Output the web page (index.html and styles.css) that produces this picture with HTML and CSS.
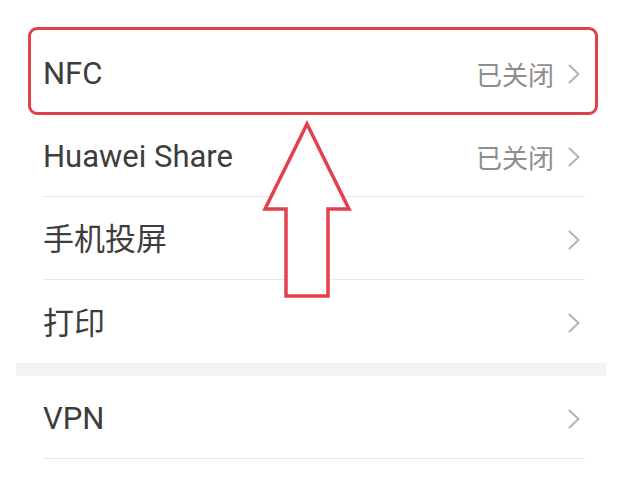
FILE: index.html
```html
<!DOCTYPE html>
<html lang="zh-CN">
<head>
<meta charset="utf-8">
<title>更多连接</title>
<link rel="stylesheet" href="styles.css">
</head>
<body>
<div class="page">
  <section class="card first">
    <div class="row"><span class="label">NFC</span><span class="trail"><span class="value">已关闭</span><svg class="chev" viewBox="0 0 12 20"><polyline points="1.5,1.5 10.5,10 1.5,18.5"/></svg></span></div>
    <div class="row"><span class="label">Huawei Share</span><span class="trail"><span class="value">已关闭</span><svg class="chev" viewBox="0 0 12 20"><polyline points="1.5,1.5 10.5,10 1.5,18.5"/></svg></span></div>
    <div class="row"><span class="label">手机投屏</span><span class="trail"><svg class="chev" viewBox="0 0 12 20"><polyline points="1.5,1.5 10.5,10 1.5,18.5"/></svg></span></div>
    <div class="row last"><span class="label">打印</span><span class="trail"><svg class="chev" viewBox="0 0 12 20"><polyline points="1.5,1.5 10.5,10 1.5,18.5"/></svg></span></div>
  </section>
  <div class="band"></div>
  <section class="card">
    <div class="row"><span class="label">VPN</span><span class="trail"><svg class="chev" viewBox="0 0 12 20"><polyline points="1.5,1.5 10.5,10 1.5,18.5"/></svg></span></div>
  </section>
  <div class="highlight"></div>
  <svg class="arrow" viewBox="0 0 640 480" width="640" height="480">
    <polygon points="307,124 349,209 328,209 328,296 286,296 286,209 265,209"/>
  </svg>
</div>
</body>
</html>
```

FILE: styles.css
```css
html, body {
  margin: 0;
  padding: 0;
  background: #ffffff;
}
body {
  font-family: Roboto, "Noto Sans CJK SC", sans-serif;
  color: #3a3a3a;
  width: 640px;
  height: 480px;
  overflow: hidden;
}
.page {
  position: relative;
  width: 640px;
  height: 480px;
  overflow: hidden;
}
.card {
  margin: 0 34px 0 16px;
  background: #ffffff;
}
.card.first {
  padding-top: 31px;
}
.row {
  display: flex;
  align-items: center;
  justify-content: space-between;
  box-sizing: border-box;
  height: 83px;
  padding: 3px 5px 0 0;
  margin: 0 21px 0 27px;
  border-bottom: 1px solid #e9e9e9;
}
.row.last {
  border-bottom: none;
}
.label {
  font-size: 31px;
  line-height: 1;
  color: #3d3d3d;
}
.trail {
  display: flex;
  align-items: center;
  gap: 14px;
}
.value {
  font-family: "Noto Sans CJK SC", sans-serif;
  font-size: 26px;
  line-height: 1;
  color: #8d8d8d;
}
.chev {
  width: 12px;
  height: 20px;
  display: block;
}
.chev polyline {
  fill: none;
  stroke: #b3b3b3;
  stroke-width: 2;
  stroke-linecap: round;
  stroke-linejoin: round;
}
.band {
  height: 13px;
  margin: 0 34px 0 16px;
  background: #f3f3f3;
}
.highlight {
  position: absolute;
  left: 28px;
  top: 27px;
  width: 564px;
  height: 82px;
  border: 3px solid #e2414c;
  border-radius: 9px;
}
.arrow {
  position: absolute;
  left: 0;
  top: 0;
}
.arrow polygon {
  fill: #ffffff;
  stroke: #e2414c;
  stroke-width: 3.5;
  stroke-linejoin: miter;
}
```
